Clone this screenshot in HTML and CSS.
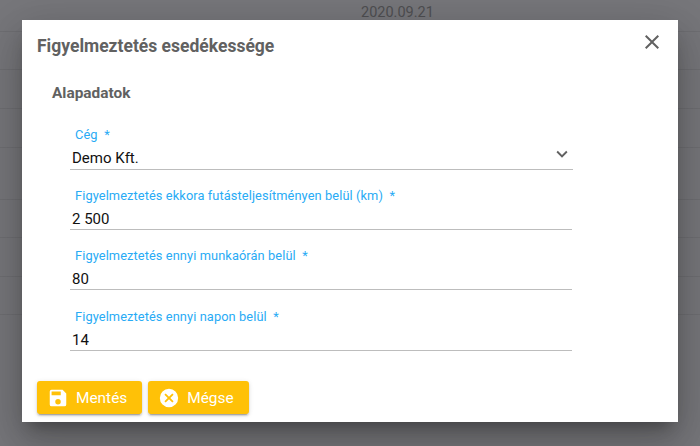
FILE: index.html
```html
<!DOCTYPE html>
<html lang="hu">
<head>
<meta charset="utf-8">
<title>Figyelmeztetés esedékessége</title>
<link rel="stylesheet" href="styles.css">
</head>
<body>
<div class="backdrop">
  <div class="bg-date">2020.09.21</div>
  <div class="bg-row bg-first"></div>
  <div class="bg-row bg-short"></div>
  <div class="bg-row"></div>
  <div class="bg-row"></div>
  <div class="bg-row bg-tall"></div>
  <div class="bg-row bg-short"></div>
  <div class="bg-row"></div>
  <div class="bg-row bg-short"></div>
</div>
<div class="dialog">
  <header class="dialog-head">
    <h1 class="dialog-title">Figyelmeztetés esedékessége</h1>
    <svg class="close" width="24" height="24" viewBox="0 0 24 24"><path fill="#616161" d="M19 6.41 17.59 5 12 10.59 6.41 5 5 6.41 10.59 12 5 17.59 6.41 19 12 13.41 17.59 19 19 17.59 13.41 12z"/></svg>
  </header>
  <h2 class="section">Alapadatok</h2>
  <div class="fields">
    <div class="field field-select">
      <label class="label">Cég&nbsp; *</label>
      <div class="value select-value"><span class="select-text">Demo Kft.</span>
        <svg class="chevron" width="22" height="22" viewBox="0 0 24 24"><path fill="#616161" d="M16.59 8.59 12 13.17 7.41 8.59 6 10l6 6 6-6z"/></svg>
      </div>
    </div>
    <div class="field">
      <label class="label">Figyelmeztetés ekkora futásteljesítményen belül (km)&nbsp; *</label>
      <div class="value">2 500</div>
    </div>
    <div class="field">
      <label class="label">Figyelmeztetés ennyi munkaórán belül&nbsp; *</label>
      <div class="value">80</div>
    </div>
    <div class="field">
      <label class="label">Figyelmeztetés ennyi napon belül&nbsp; *</label>
      <div class="value">14</div>
    </div>
  </div>
  <footer class="actions">
    <button class="btn btn-save">
      <svg width="22" height="22" viewBox="0 0 24 24"><path fill="#fff" d="M17 3H5a2 2 0 0 0-2 2v14a2 2 0 0 0 2 2h14a2 2 0 0 0 2-2V7l-4-4zm-5 16a3 3 0 1 1 0-6 3 3 0 0 1 0 6zm3-10H5V5h10v4z"/></svg>
      Mentés
    </button>
    <button class="btn btn-cancel">
      <svg width="22" height="22" viewBox="0 0 24 24"><path fill="#fff" d="M12 2a10 10 0 1 0 0 20 10 10 0 0 0 0-20zm5 13.59L15.59 17 12 13.41 8.41 17 7 15.59 10.59 12 7 8.41 8.41 7 12 10.59 15.59 7 17 8.41 13.41 12 17 15.59z"/></svg>
      Mégse
    </button>
  </footer>
</div>
</body>
</html>
```

FILE: styles.css
```css
* { box-sizing: border-box; }
html, body { margin: 0; height: 100%; }
body {
  width: 700px; height: 446px; overflow: hidden; position: relative;
  background: #77777b;
  font-family: Roboto, "Liberation Sans", sans-serif;
}
.backdrop { height: 446px; overflow: hidden; }
.bg-date {
  position: absolute; left: 361px; top: 4px;
  font-size: 14.5px; line-height: 18px; color: #4f4f52;
}
.bg-row { height: 39px; border-bottom: 1px solid #6f6f73; }
.bg-first { height: 32px; }
.bg-short { height: 38px; }
.bg-tall { height: 52px; }
.dialog {
  position: absolute; left: 22px; top: 20px; width: 656px; height: 402px;
  background: #fff;
  box-shadow: 0 11px 15px -7px rgba(0,0,0,.3), 0 24px 38px 3px rgba(0,0,0,.14), 0 9px 46px 8px rgba(0,0,0,.12);
  padding: 15px 15px 0;
  display: flex; flex-direction: column;
}
.dialog-head { display: flex; justify-content: space-between; align-items: flex-start; height: 24px; }
.dialog-title { margin: 1px 0 0; font-size: 17.5px; line-height: 20px; font-weight: 700; color: #616161; }
.close { margin-right: -1px; margin-top: -5px; }
.section { margin: 25px 0 0 15px; font-size: 15.4px; line-height: 18px; font-weight: 700; color: #616161; }
.fields { margin: 25px 0 0 33px; width: 503px; display: flex; flex-direction: column; }
.field { height: 60.2px; }
.field:not(.field-select) { padding-top: 1px; }
.field:not(.field-select) .value { height: 24px; margin-right: 1px; line-height: 27px; }
.label { display: block; padding-left: 5px; font-size: 12.8px; line-height: 16px; color: #29abf5; letter-spacing: .1px; }
.value {
  height: 25px; border-bottom: 1px solid #bdbdbd;
  padding-left: 2px;
  font-size: 15px; line-height: 24px; color: #111;
  margin-top: 2px;
}
.field-select .value { display: flex; justify-content: space-between; align-items: center; }
.select-text { margin-top: 2px; }
.chevron { margin-top: -7px; }
.actions { display: flex; gap: 6px; margin-top: auto; margin-bottom: 8px; }
.btn {
  display: flex; align-items: center; gap: 7px; height: 33px; padding: 0 15px 0 10px;
  border: 0; border-radius: 3px; background: #ffc107; color: #fff;
  font: 400 15.4px/20px Roboto, sans-serif;
  box-shadow: 0 3px 1px -2px rgba(0,0,0,.2), 0 2px 2px 0 rgba(0,0,0,.14), 0 1px 5px 0 rgba(0,0,0,.12);
}
```
